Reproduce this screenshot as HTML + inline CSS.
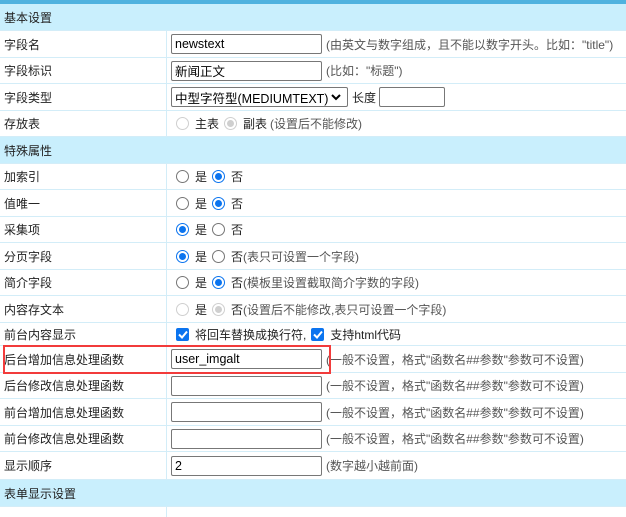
<!DOCTYPE html>
<html><head><meta charset="utf-8"><style>
*{margin:0;padding:0;box-sizing:border-box}
body{width:626px;height:511px;overflow:hidden;background:#fff;font-family:"Liberation Sans","Noto Sans CJK SC",sans-serif;font-size:12px;color:#222;position:relative}
.top{position:absolute;left:0;top:0;width:626px;height:4px;background:#4fb2df}
.r{position:absolute;left:0;width:626px;border-bottom:1px solid #d3edf8;display:flex;align-items:center}
.h{background:#c9effd;padding-left:4px;color:#222}
.l{width:167px;height:100%;border-right:1px solid #d3edf8;padding-left:4px;display:flex;align-items:center}
.v{padding-left:4px;display:flex;align-items:center;height:100%;white-space:nowrap}
.in{width:151px;height:20px;border:1px solid #777;border-radius:2px;padding-left:3px;font-size:12.5px;display:flex;align-items:center;color:#000}
.hint{color:#555;margin-left:4px}
.rd{width:13px;height:13px;border-radius:50%;border:1px solid #767676;display:inline-block;margin:0 6px 0 5px;background:#fff;position:relative}
.rd.on{border:1px solid #0b74ef}
.rd.on::after{content:"";position:absolute;left:2px;top:2px;width:7px;height:7px;border-radius:50%;background:#0b74ef}
.rd.dis{border-color:#cfcfcf}
.rd.dis.on::after{background:#cfcfcf}
.cb{width:13px;height:13px;border-radius:2px;background:#0b74ef;display:inline-flex;align-items:center;justify-content:center;margin:0 6px 0 5px}
.box{position:absolute;left:3px;top:345px;width:328px;height:29px;border:2px solid #f23b3b}
</style></head><body>
<div class="top"></div>
<div class="r h" style="top:4px;height:27px">基本设置</div>
<div class="r" style="top:31px;height:27px"><div class="l">字段名</div><div class="v"><div class="in">newstext</div><span class="hint">(由英文与数字组成，且不能以数字开头。比如："title")</span></div></div>
<div class="r" style="top:58px;height:26px"><div class="l">字段标识</div><div class="v"><div class="in">新闻正文</div><span class="hint">(比如："标题")</span></div></div>
<div class="r" style="top:84px;height:27px"><div class="l">字段类型</div><div class="v"><div class="in" style="width:177px;justify-content:space-between;padding-right:6px">中型字符型(MEDIUMTEXT)<svg width="10" height="7" viewBox="0 0 10 7"><path d="M1 1l4 4 4-4" stroke="#000" stroke-width="2" fill="none"/></svg></div><span style="margin-left:4px">长度</span><div class="in" style="width:66px;margin-left:3px"></div></div></div>
<div class="r" style="top:111px;height:26px"><div class="l">存放表</div><div class="v"><span class="rd dis"></span>主表<span class="rd dis on"></span>副表 <span class="hint" style="margin-left:3px">(设置后不能修改)</span></div></div>
<div class="r h" style="top:137px;height:27px">特殊属性</div>
<div class="r" style="top:164px;height:26px"><div class="l">加索引</div><div class="v"><span class="rd"></span>是<span class="rd on"></span>否</div></div>
<div class="r" style="top:190px;height:27px"><div class="l">值唯一</div><div class="v"><span class="rd"></span>是<span class="rd on"></span>否</div></div>
<div class="r" style="top:217px;height:26px"><div class="l">采集项</div><div class="v"><span class="rd on"></span>是<span class="rd"></span>否</div></div>
<div class="r" style="top:243px;height:27px"><div class="l">分页字段</div><div class="v"><span class="rd on"></span>是<span class="rd"></span>否<span style="color:#555">(表只可设置一个字段)</span></div></div>
<div class="r" style="top:270px;height:26px"><div class="l">简介字段</div><div class="v"><span class="rd"></span>是<span class="rd on"></span>否<span style="color:#555">(模板里设置截取简介字数的字段)</span></div></div>
<div class="r" style="top:296px;height:27px"><div class="l">内容存文本</div><div class="v"><span class="rd dis"></span>是<span class="rd dis on"></span>否<span style="color:#555">(设置后不能修改,表只可设置一个字段)</span></div></div>
<div class="r" style="top:323px;height:23px"><div class="l">前台内容显示</div><div class="v"><span class="cb"><svg width="10" height="9" viewBox="0 0 10 9"><path d="M1 4.5l3 3 5-6" stroke="#fff" stroke-width="2" fill="none"/></svg></span>将回车替换成换行符,<span class="cb"><svg width="10" height="9" viewBox="0 0 10 9"><path d="M1 4.5l3 3 5-6" stroke="#fff" stroke-width="2" fill="none"/></svg></span>支持html代码</div></div>
<div class="r" style="top:346px;height:27px"><div class="l">后台增加信息处理函数</div><div class="v"><div class="in">user_imgalt</div><span class="hint">(一般不设置，格式"函数名##参数"参数可不设置)</span></div></div>
<div class="r" style="top:373px;height:26px"><div class="l">后台修改信息处理函数</div><div class="v"><div class="in"></div><span class="hint">(一般不设置，格式"函数名##参数"参数可不设置)</span></div></div>
<div class="r" style="top:399px;height:27px"><div class="l">前台增加信息处理函数</div><div class="v"><div class="in"></div><span class="hint">(一般不设置，格式"函数名##参数"参数可不设置)</span></div></div>
<div class="r" style="top:426px;height:26px"><div class="l">前台修改信息处理函数</div><div class="v"><div class="in"></div><span class="hint">(一般不设置，格式"函数名##参数"参数可不设置)</span></div></div>
<div class="r" style="top:452px;height:28px"><div class="l">显示顺序</div><div class="v"><div class="in">2</div><span class="hint">(数字越小越前面)</span></div></div>
<div class="r h" style="top:480px;height:27px">表单显示设置</div>
<div class="r" style="top:507px;height:10px;border:none"><div class="l"></div></div>
<div class="box"></div>
</body></html>
